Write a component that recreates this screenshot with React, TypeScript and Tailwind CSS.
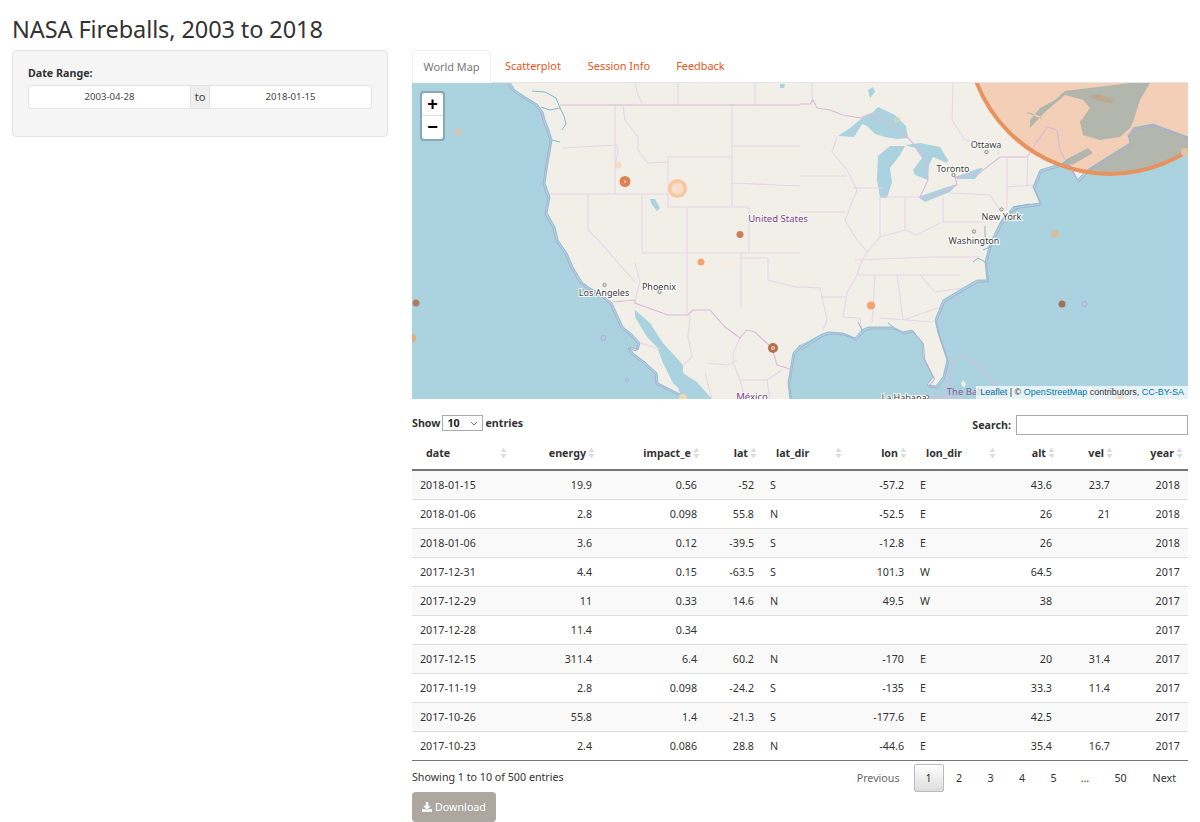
import { FaDownload } from "react-icons/fa";

const rows = [
  ["2018-01-15", "19.9", "0.56", "-52", "S", "-57.2", "E", "43.6", "23.7", "2018"],
  ["2018-01-06", "2.8", "0.098", "55.8", "N", "-52.5", "E", "26", "21", "2018"],
  ["2018-01-06", "3.6", "0.12", "-39.5", "S", "-12.8", "E", "26", "", "2018"],
  ["2017-12-31", "4.4", "0.15", "-63.5", "S", "101.3", "W", "64.5", "", "2017"],
  ["2017-12-29", "11", "0.33", "14.6", "N", "49.5", "W", "38", "", "2017"],
  ["2017-12-28", "11.4", "0.34", "", "", "", "", "", "", "2017"],
  ["2017-12-15", "311.4", "6.4", "60.2", "N", "-170", "E", "20", "31.4", "2017"],
  ["2017-11-19", "2.8", "0.098", "-24.2", "S", "-135", "E", "33.3", "11.4", "2017"],
  ["2017-10-26", "55.8", "1.4", "-21.3", "S", "-177.6", "E", "42.5", "", "2017"],
  ["2017-10-23", "2.4", "0.086", "28.8", "N", "-44.6", "E", "35.4", "16.7", "2017"],
];

const columns = [
  { name: "date", width: 100, left: true },
  { name: "energy", width: 88, left: false },
  { name: "impact_e", width: 105, left: false },
  { name: "lat", width: 57, left: false },
  { name: "lat_dir", width: 85, left: true },
  { name: "lon", width: 65, left: false },
  { name: "lon_dir", width: 89, left: true },
  { name: "alt", width: 59, left: false },
  { name: "vel", width: 58, left: false },
  { name: "year", width: 70, left: false },
];

const westCoast =
  "M510 83 515 90 527 98 537 104 543 112 545 120 549 130 552 140 550 152 548 163 545 183 550 197 547 213 555 227 558 240 567 253 573 267 582 282 590 288 600 293 612 303 618 316 623 327 632 334 640 343 638 350 630 347 633 353 645 362 657 373 658 383 672 390 680 394";
const gulfCoast =
  "M800 345 793 353 788 383 790 399M800 348 820 335 828 332 843 333 855 338 862 330 868 327 893 327 903 332 912 330 922 342 923 357 933 377 927 385 936 386 943 377 947 360 938 333 935 320 943 300 963 288 977 280 987 280 985 262 990 243 1000 223 1013 207 1040 203 1033 187 1040 170 1063 163 1067 160 1077 180 1087 170 1130 143 1128 135 1133 128 1153 124 1188 137";
const inlets =
  "M541 107 550 110 560 108 564 116 566 124 562 130M560 108 556 98 545 92 532 91M552 140 560 142M983 250 992 246 985 236 985 226M985 262 978 258 973 262M990 243 982 240M1000 223 1006 214 1020 208M1013 207 1030 204M862 330 858 322M893 327 888 323";

const water =
  "M412 83 510 83 515 90 527 98 537 104 543 112 545 120 549 130 552 140 550 152 548 163 545 183 550 197 547 213 555 227 558 240 567 253 573 267 582 282 590 288 600 293 612 303 618 316 623 327 632 334 640 343 638 350 630 347 633 353 645 362 657 373 658 383 672 390 680 394 678 388 673 383 663 363 657 347 647 337 635 317 635 310 650 323 663 343 683 365 683 373 697 382 712 399 412 399Z" +
  "M800 345 820 335 828 332 843 333 855 338 862 330 868 327 893 327 903 332 912 330 922 342 923 357 933 377 927 385 936 386 943 377 947 360 938 333 935 320 943 300 963 288 977 280 987 280 985 262 990 243 1000 223 1013 207 1040 203 1033 187 1040 170 1063 163 1067 160 1077 180 1087 170 1130 143 1128 135 1133 128 1153 124 1188 137 1188 399 790 399 788 383 793 353Z" +
  "M1030 128 1045 112 1065 95 1083 100 1090 108 1080 122 1083 135 1100 140 1120 137 1130 128 1133 122 1140 100 1150 83 1130 83 1065 91 1055 100 1040 108 1030 120Z" +
  "M1027 112 1040 116 1042 120 1040 118 1027 113Z" +
  "M1065 160 1088 148 1093 153 1072 165Z" +
  "M838 136 850 128 862 118 872 113 878 107 895 115 906 126 908 138 897 139 885 137 875 134 867 126 862 124 854 137Z" +
  "M905 146 890 146 878 156 877 180 880 198 887 198 892 182 890 168 900 155Z" +
  "M905 145 920 143 940 147 948 160 947 163 933 157 929 165 928 180 915 175 913 170 922 158 915 148Z" +
  "M918 197 947 187 957 184 950 192 925 202Z" +
  "M955 177 980 168 983 168 975 179 957 179Z" +
  "M780 84 785 84 784 88 780 88Z M868 90 873 87 875 92 870 98Z M650 199 655 199 660 208 657 211 652 205Z";

const borders =
  "M678 83 678 105M755 83 755 105M635 83 638 95 642 103M953 83 952 120 965 140 998 145 998 155" +
  "M615 105 615 165 615 194M623 105 625 120 638 137 638 150 648 163 668 162M732 105 732 207M668 157 732 157 732 207 668 207 668 157" +
  "M563 148 617 145 618 152 615 165M550 194 668 194M588 194 588 230 598 240 635 282M642 194 642 253M687 207 687 313M687 207 749 207 749 253" +
  "M642 253 800 253M635 263 640 282 635 300M741 253 741 308M741 258 768 258 768 280 800 288M732 146 800 146M732 183 800 186" +
  "M812 83 812 104M800 176 847 176M837 137 832 152 847 170 857 190 845 220 855 237 867 252 860 265 857 275 847 293 843 317 860 318 862 330" +
  "M800 212 845 212M853 188 883 188M880 197 880 237 867 252M905 198 905 230M880 197 920 197M943 197 943 222 985 222M950 193 990 195 1000 210" +
  "M1007 158 1007 210M1007 187 1033 185M1028 157 1027 185M880 237 905 230 917 235 940 223M855 260 933 257 980 257M857 275 960 275M920 275 935 292 963 288" +
  "M800 287 820 288 827 320 823 330M822 297 847 297M875 275 872 323M897 275 903 320M880 318 933 322M903 320 938 308" +
  "M690 315 688 337 692 357 683 365M740 338 733 353 733 362 740 380 767 380 782 370M708 363 728 365 737 360M705 373 712 399M640 343 660 349M740 380 745 399M767 380 770 399";

const marineBorder =
  "M613 302 635 300 635 303 668 315 688 315 693 310 710 310 725 327 740 338 747 330 755 332 772 348 777 365 793 370" +
  "M800 104 810 104 813 100 817 108 830 110 843 115 860 118 872 113 907 137 915 145 927 160 928 180 920 197 933 197 957 185 955 177 977 175 1000 157 1027 157 1047 127 1057 130 1060 150 1065 160" +
  "M560 105 800 105M947 399 953 360 963 355 980 367 997 387 1004 399M917 399 940 396 960 399M1128 135 1133 128";

const markers = [
  { x: 458, y: 132, r: 3, fill: "#dcc4a0" },
  { x: 618, y: 165, r: 3.5, fill: "#f8dcc2" },
  { x: 731, y: 264, r: 3, fill: "#f6eee2" },
  { x: 740, y: 234.5, r: 3.5, fill: "#c98059" },
  { x: 701, y: 262, r: 3.5, fill: "#f4a26f" },
  { x: 416, y: 303, r: 3.5, fill: "#b47a5f" },
  { x: 412, y: 338, r: 4, fill: "#e3a87c" },
  { x: 683, y: 398, r: 4, fill: "#f3d6b4" },
  { x: 871, y: 305.5, r: 4, fill: "#f5a26f" },
  { x: 849, y: 276.5, r: 3, fill: "#f7eedd" },
  { x: 1062, y: 304, r: 3.5, fill: "#9e735a" },
  { x: 1055, y: 234, r: 4, fill: "#d6bfa0" },
  { x: 1185, y: 152, r: 4, fill: "#e3c3a2" },
  { x: 897, y: 120, r: 3, fill: "#c8d6c4" },
  { x: 1090, y: 391, r: 3, fill: "#f3e0c8" },
  { x: 1120, y: 398, r: 4, fill: "#d4896a" },
];

const labels = [
  { x: 986, y: 148, text: "Ottawa", dot: [986.5, 152] },
  { x: 953, y: 172, text: "Toronto", dot: [953.5, 175] },
  { x: 1001.5, y: 220, text: "New York", dot: [1001.5, 209.5] },
  { x: 974, y: 243.5, text: "Washington", dot: [974, 231.5] },
  { x: 659, y: 289.5, text: "Phoenix", dot: [659.5, 292] },
  { x: 604, y: 296, text: "Los Angeles", dot: [604.5, 285] },
  { x: 904, y: 401, text: "La Habana", dot: [927, 397] },
];

function FireballMap() {
  return (
    <svg viewBox="412 83 776 316" className="block h-full w-full">
      <defs>
        <clipPath id="bigCircle">
          <circle cx={1110} cy={31} r={143} />
        </clipPath>
      </defs>
      <rect x={412} y={83} width={776} height={316} fill="#f2efe9" />
      <path d={water} fill="#aad3df" />
      <circle cx={1110} cy={31} r={143} fill="#f2cfb6" />
      <path d={water} fill="#b2b6ad" clipPath="url(#bigCircle)" />
      <path d="M1087 96 1100 94 1113 100 1112 103 1098 101Z" fill="#b9aa92" />
      <path d={borders} fill="none" stroke="#e8d6e8" strokeWidth={1.1} />
      <path d={inlets} fill="none" stroke="#7fb9d0" strokeWidth={1} />
      <path d={westCoast} fill="none" stroke="#7fb9d0" strokeWidth={0.8} />
      <path d={westCoast} fill="none" stroke="#b3abd2" strokeWidth={1} transform="translate(-2 1)" />
      <path d={gulfCoast} fill="none" stroke="#7fb9d0" strokeWidth={0.8} />
      <path d={gulfCoast} fill="none" stroke="#b3abd2" strokeWidth={1} transform="translate(1.5 2)" />
      <path d={marineBorder} fill="none" stroke="#dcb9dc" strokeWidth={1.1} />
      <circle cx={603.5} cy={338} r={2.5} fill="none" stroke="#b3abd2" strokeWidth={1} />
      <circle cx={627} cy={380} r={1.5} fill="none" stroke="#b3abd2" strokeWidth={1} />
      <circle cx={1084.5} cy={304} r={2.5} fill="none" stroke="#b3abd2" strokeWidth={1} />
      <path d="M963 380 966 384 964 388 961 384Z" fill="#f2efe9" />
      <circle cx={1110} cy={31} r={143} fill="none" stroke="#e8935f" strokeWidth={4} />
      {markers.map((m) => (
        <circle key={`${m.x}-${m.y}`} cx={m.x} cy={m.y} r={m.r} fill={m.fill} />
      ))}
      <circle cx={625} cy={181.5} r={5.5} fill="#dd8353" />
      <circle cx={625} cy={181.5} r={1} fill="#f8e5d5" />
      <circle cx={677.5} cy={188.5} r={9.5} fill="#f8c79c" />
      <circle cx={677.5} cy={188.5} r={6} fill="#f5dfcc" />
      <circle cx={773} cy={348} r={5} fill="#b56d4d" />
      <circle cx={773} cy={348} r={2} fill="#e8c8b5" />
      <circle cx={773} cy={348} r={0.8} fill="#b56d4d" />
      <g fontFamily="'Noto Sans', sans-serif" fontSize={9} textAnchor="middle">
        {labels.map((l) => (
          <g key={l.text}>
            <circle cx={l.dot[0]} cy={l.dot[1]} r={1.6} fill="#fff" stroke="#666" strokeWidth={0.8} />
            <text x={l.x} y={l.y} fill="#3a3a3a" stroke="#fff" strokeWidth={2} paintOrder="stroke">
              {l.text}
            </text>
          </g>
        ))}
        <text x={778} y={222} fontSize={9.5} fill="#7b3f86" stroke="#fff" strokeOpacity={0.7} strokeWidth={1.5} paintOrder="stroke">
          United States
        </text>
        <text x={752} y={400} fontSize={9.5} fill="#7b3f86" stroke="#fff" strokeOpacity={0.7} strokeWidth={1.5} paintOrder="stroke">
          México
        </text>
        <text x={977} y={395} fontSize={9.5} fill="#8e5a95">
          The Bahamas
        </text>
      </g>
    </svg>
  );
}

function SortIcon() {
  return (
    <svg width="7" height="12" viewBox="0 0 7 12" className="shrink-0">
      <path d="M3.5 0.5 6.5 5H0.5Z" fill="#dcdcdc" />
      <path d="M3.5 11.5 6.5 7H0.5Z" fill="#dcdcdc" />
    </svg>
  );
}

export default function App() {
  return (
    <div className="h-[822px] overflow-hidden bg-white text-[10.7px] text-[#333] font-['Noto_Sans',sans-serif]">
      <h2 className="h-[50px] px-3 pt-[14px] text-[23.5px] leading-[30px] tracking-[-0.1px] text-[#333]">
        NASA Fireballs, 2003 to 2018
      </h2>
      <div className="flex">
        <div className="w-[400px] px-3">
          <div className="h-[87px] rounded border border-[#e3e3e3] bg-[#f5f5f5] px-[15px] pt-[15px]">
            <div className="mb-[5px] font-bold leading-[14px]">Date Range:</div>
            <div className="flex h-6 rounded-[3px] border border-[#e3e3e3] bg-white text-[9.6px] text-[#444]">
              <div className="flex flex-1 items-center justify-center">2003-04-28</div>
              <div className="flex w-5 items-center justify-center border-x border-[#e3e3e3] bg-[#eeeeee] text-[11px]">
                to
              </div>
              <div className="flex flex-1 items-center justify-center">2018-01-15</div>
            </div>
          </div>
        </div>
        <div className="w-[800px] px-3">
          <div className="flex h-[33px] items-stretch border-b border-[#e5e5e5] text-[10.9px]">
            <div className="flex h-[33px] w-[79px] items-center justify-center rounded-t border border-b-0 border-[#eeeeee] bg-white text-[#777]">
              World Map
            </div>
            <div className="flex items-center pl-[14px] text-[#e95420]">Scatterplot</div>
            <div className="flex items-center pl-[27px] text-[#e95420]">Session Info</div>
            <div className="flex items-center pl-[26px] text-[#e95420]">Feedback</div>
          </div>
          <div className="relative h-[316px] overflow-hidden">
            <FireballMap />
            <div className="absolute left-2 top-2 w-[25px] rounded border-2 border-black/20 bg-white bg-clip-padding font-['Liberation_Sans',sans-serif]">
              <div className="flex h-[23px] items-center justify-center border-b border-[#ddd] text-[18px] font-bold text-black">
                +
              </div>
              <div className="flex h-[23px] items-center justify-center text-[18px] font-bold text-black">−</div>
            </div>
            <div className="absolute bottom-0 right-0 bg-white/70 px-[4px] pb-[1px] text-[9px] leading-[12px] text-[#333] font-['Liberation_Sans',sans-serif]">
              <span className="text-[#0078a8]">Leaflet</span> | © <span className="text-[#0078a8]">OpenStreetMap</span>{" "}
              contributors, <span className="text-[#0078a8]">CC-BY-SA</span>
            </div>
          </div>
          <div className="mt-4 flex h-[23px] items-start justify-between">
            <div className="flex h-4 items-center gap-[2px] font-bold">
              Show
              <div className="flex h-4 w-[41px] items-center justify-between border border-[#aaa] px-1 text-[#222]">
                10
                <svg width="8" height="5" viewBox="0 0 8 5">
                  <path d="M1 1 4 4 7 1" fill="none" stroke="#777" strokeWidth="1" />
                </svg>
              </div>
              entries
            </div>
            <div className="flex items-center gap-[5px] font-bold">
              Search:
              <div className="h-5 w-[172px] border border-[#aaa] bg-white" />
            </div>
          </div>
          <table className="w-[776px] table-fixed border-collapse border-b border-[#777]">
            <colgroup>
              {columns.map((c) => (
                <col key={c.name} style={{ width: c.width }} />
              ))}
            </colgroup>
            <thead>
              <tr className="h-[32px]">
                {columns.map((c) => (
                  <th key={c.name} className="border-b-2 border-[#777] p-0 font-bold">
                    <div
                      className={
                        c.left
                          ? "flex items-center justify-between pl-[14px] pr-[5px]"
                          : "flex items-center justify-end gap-[2px] pr-[5px]"
                      }
                    >
                      <span>{c.name}</span>
                      <SortIcon />
                    </div>
                  </th>
                ))}
              </tr>
            </thead>
            <tbody>
              {rows.map((row, i) => (
                <tr key={i} className={i % 2 === 0 ? "h-[29.1px] bg-[#f9f9f9]" : "h-[29.1px] bg-white"}>
                  {row.map((cell, j) => (
                    <td
                      key={j}
                      className={
                        columns[j].left
                          ? "border-t border-[#ddd] px-2 py-0 text-left"
                          : "border-t border-[#ddd] px-2 py-0 text-right"
                      }
                    >
                      {cell}
                    </td>
                  ))}
                </tr>
              ))}
            </tbody>
          </table>
          <div className="flex h-[31px] items-start justify-between">
            <div className="pt-[9px] leading-[15px]">Showing 1 to 10 of 500 entries</div>
            <div className="flex items-center pr-[12px] pt-[3px]">
              <div className="mr-[14px] text-[#666]">Previous</div>
              <div className="flex h-7 w-[30px] items-center justify-center rounded-[2px] border border-[#bbb] bg-gradient-to-b from-white to-[#dcdcdc]">
                1
              </div>
              <div className="w-[31px] text-center">2</div>
              <div className="w-[32px] text-center">3</div>
              <div className="w-[31px] text-center">4</div>
              <div className="w-[32px] text-center">5</div>
              <div className="w-[31px] text-center">…</div>
              <div className="w-[40px] text-center">50</div>
              <div className="ml-[12px]">Next</div>
            </div>
          </div>
          <div className="flex h-[30px] w-[84px] items-center justify-center gap-[3px] rounded bg-[#aea79f] text-white">
            <FaDownload className="text-[10px]" />
            Download
          </div>
        </div>
      </div>
    </div>
  );
}
